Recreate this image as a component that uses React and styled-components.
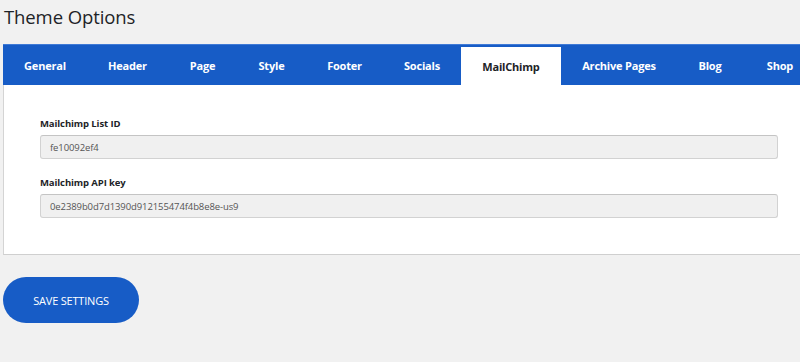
import React from 'react'
import styled, { createGlobalStyle } from 'styled-components'

const GlobalStyle = createGlobalStyle`
  html, body {
    margin: 0;
    padding: 0;
    background: #f1f1f1;
    font-family: "Open Sans", "Noto Sans", sans-serif;
  }
`

const Page = styled.div`
  padding: 0 0 0 3px;
  width: 800px;
  height: 362px;
  box-sizing: border-box;
  overflow: hidden;
`

const Title = styled.h1`
  margin: 0;
  padding: 4px 0 0 1px;
  height: 39px;
  box-sizing: border-box;
  font-size: 18.5px;
  font-weight: 400;
  color: #1d2327;
  letter-spacing: -0.1px;
`

const TabBar = styled.div`
  display: flex;
  height: 41px;
  background: #175cc6;
  border-top: 1px solid #3f7ad6;
  box-sizing: border-box;
  margin-top: 5px;
  width: 820px;
`

const Tab = styled.div`
  flex: none;
  width: ${p => p.w}px;
  display: flex;
  align-items: center;
  justify-content: center;
  margin-top: ${p => (p.active ? 2 : 0)}px;
  background: ${p => (p.active ? '#ffffff' : 'transparent')};
  color: ${p => (p.active ? '#1d2327' : '#ffffff')};
  font-size: 11px;
  font-weight: 700;
  white-space: nowrap;
  letter-spacing: -0.2px;
`

const Panel = styled.div`
  background: #fff;
  border-left: 1px solid #d4d4d4;
  border-bottom: 1px solid #cfcfcf;
  height: 170px;
  box-sizing: border-box;
  padding: 32px 0 0 36px;
  width: 820px;
`

const Field = styled.div`
  margin-bottom: 17px;
`

const Label = styled.div`
  font-size: 9.5px;
  font-weight: 700;
  color: #1d2327;
  margin-bottom: 5px;
  letter-spacing: -0.1px;
`

const Input = styled.div`
  width: 738px;
  height: 24px;
  box-sizing: border-box;
  background: #f0f0f0;
  border: 1px solid #d2d2d2;
  border-top-color: #c4c4c4;
  border-radius: 3px;
  padding: 0 9px;
  display: flex;
  align-items: center;
  font-size: 9.5px;
  color: #555;
  letter-spacing: -0.1px;
`

const SaveButton = styled.button`
  margin-top: 22px;
  width: 136px;
  height: 46px;
  border: none;
  border-radius: 23px;
  background: #175cc6;
  color: #fff;
  font-family: "Open Sans", "Noto Sans", sans-serif;
  font-size: 11px;
  font-weight: 400;
  letter-spacing: -0.2px;
  cursor: pointer;
`

const tabs = [
  ['General', 84],
  ['Header', 81],
  ['Page', 69],
  ['Style', 69],
  ['Footer', 77],
  ['Socials', 78],
  ['MailChimp', 100],
  ['Archive Pages', 116],
  ['Blog', 66],
  ['Shop', 74],
]

export default function App() {
  return (
    <Page>
      <GlobalStyle />
      <Title>Theme Options</Title>
      <TabBar>
        {tabs.map(([t, w]) => (
          <Tab key={t} w={w} active={t === 'MailChimp'}>{t}</Tab>
        ))}
      </TabBar>
      <Panel>
        <Field>
          <Label>Mailchimp List ID</Label>
          <Input>fe10092ef4</Input>
        </Field>
        <Field>
          <Label>Mailchimp API key</Label>
          <Input>0e2389b0d7d1390d912155474f4b8e8e-us9</Input>
        </Field>
      </Panel>
      <SaveButton>SAVE SETTINGS</SaveButton>
    </Page>
  )
}
